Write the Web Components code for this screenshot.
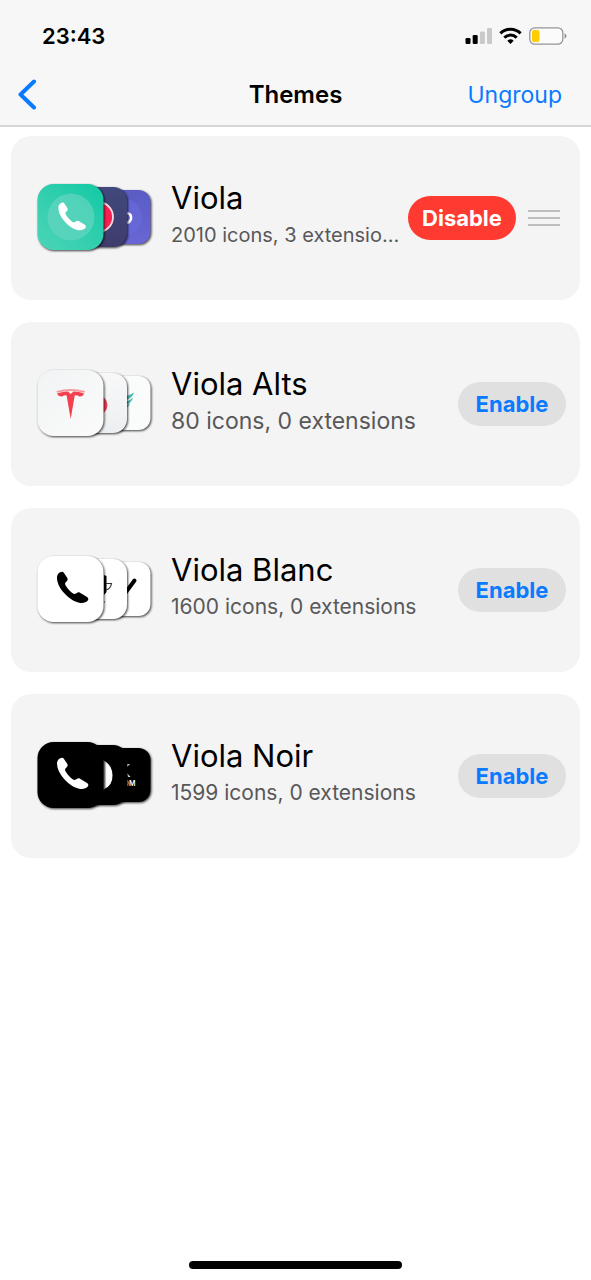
<!DOCTYPE html>
<html lang="en">
<head>
<meta charset="utf-8">
<meta name="viewport" content="width=device-width, initial-scale=1">
<title>Themes</title>
<style>
  html { font-family: Inter, "Liberation Sans", sans-serif; background: #fff; color: #000; }
  body { margin: 0; }
</style>
</head>
<body>
<themes-screen></themes-screen>

<script>
const define = (name, html, setup) => customElements.define(name, class extends HTMLElement {
  constructor() {
    super();
    this.attachShadow({ mode: "open" }).innerHTML = html;
  }
  connectedCallback() { if (setup) setup(this, this.shadowRoot); }
});

define("status-bar", `
  <style>
    :host { display: flex; align-items: center; justify-content: space-between; height: 56px; padding: 8px 24px 0 42px; }
    time { font-size: 22px; line-height: 28px; font-weight: 600; }
    .icons { display: flex; align-items: center; gap: 7px; }
    svg { display: block; }
  </style>
  <time>23:43</time>
  <div class="icons">
    <svg width="27" height="18" viewBox="0 0 27 18" aria-label="Signal">
      <rect x="0.500" y="11" width="5" height="6" rx="1.3"/><rect x="7.700" y="8" width="5" height="9" rx="1.3"/>
      <g fill="#c9c9c9"><rect x="14.900" y="4.500" width="5" height="12.500" rx="1.3"/><rect x="22" y="1" width="5" height="16" rx="1.3"/></g>
    </svg>
    <svg width="23" height="18" viewBox="0 0 23 18" fill="none" stroke="#000" stroke-width="3" aria-label="Wi-Fi">
      <path d="M1.400 6.400A14.500 14.500 0 0 1 21.600 6.400"/>
      <path d="M5.300 10.600A9 9 0 0 1 17.700 10.600"/>
      <path d="M11.500 17L8.300 13.700A4.700 4.700 0 0 1 14.700 13.700Z" fill="#000" stroke="none"/>
    </svg>
    <svg width="38" height="18" viewBox="0 0 38 18" aria-label="Battery">
      <rect x=".8" y=".8" width="33" height="16.400" rx="5" fill="#fbfbfb" stroke="#959595" stroke-width="1.300"/>
      <rect x="3" y="3" width="7.500" height="12" rx="2.200" fill="#fc0"/>
      <path d="M35.500 6.200Q37.600 7.200 37.600 9T35.500 11.800Z" fill="#959595"/>
    </svg>
  </div>`);

define("nav-bar", `
  <style>
    :host { display: grid; grid-template-columns: 1fr auto 1fr; align-items: center; height: 61px; padding: 0 29px 0 16px; border-bottom: 2px solid #d6d6d6; }
    h1 { margin: 0; font-size: 24px; line-height: 30px; font-weight: 600; padding-left: 13px; }
    button { border: 0; padding: 0; background: none; font: inherit; color: #0a7aff; cursor: pointer; }
    .back { justify-self: start; }
    .action { justify-self: end; font-size: 23px; line-height: 30px; }
    svg { display: block; }
  </style>
  <button class="back" aria-label="Back">
    <svg width="24" height="32" viewBox="0 0 24 32" fill="none" stroke="#0a7aff" stroke-width="4" stroke-linecap="round" stroke-linejoin="round"><path d="M18 2.500L4.500 15.500L18 28.500"/></svg>
  </button>
  <h1><slot></slot></h1>
  <button class="action"><slot name="action"></slot></button>`);

const phone = '<path d="M111 110C112 102 118 96 126 95C129 95 131 97 132 99L142 114C144 118 143 121 140 124L137 127C134 131 135 134 138 138C144 147 150 154 158 160C162 163 165 163 169 160C173 157 176 156 180 158L200 170C205 173 206 177 204 181C199 188 190 190 181 189C165 187 146 175 133 160C118 143 110 126 111 110Z" transform="translate(-11 -5) scale(.33333)"/>';
const art = {
  color: {
    fills: ["url(#violet)", "url(#navy)", "url(#green)"],
    back: '<circle cx="93" cy="44" r="18" fill="#6b6be0" opacity=".6"/><path d="M96 40Q101 41 100 46Q99 49 96 50" fill="none" stroke="#fff" stroke-width="2.600"/>',
    middle: '<circle cx="67" cy="44" r="15" fill="#f91f51" stroke="#fbdce4" stroke-width="1.800"/>',
    front: '<circle cx="40" cy="44" r="23.500" fill="#69d6c1" opacity=".65"/><g fill="#fff" transform="translate(41 43.500) scale(.88) translate(-41.500 -42.500)">' + phone + '</g>'
  },
  alts: {
    fills: ["#fafbfb", "url(#pale)", "url(#paper)"],
    back: '<g fill="#4bb9b2"><path d="M95 37Q99 36 103 33.500Q101.500 39 95 41Z"/><path d="M95 43Q99 41 102 38.500Q100.500 44 95 46Z"/><path d="M95 47Q97 46 99 44Q98 48 95 49Z"/></g>',
    middle: '<circle cx="67" cy="46" r="9.500" fill="#f33f51"/>',
    front: '<path d="M25.500 32Q39.500 28 54 32L53.500 33.800Q40 30 26 33.800Z" fill="#f59a9e"/><path d="M26 34.500Q32 32.600 37 32.600L39.700 35L42.500 32.600Q48 32.600 53 34.500Q52 37.800 48.500 37.500Q46 36 43.700 36.400L39.700 60L35.600 36.400Q33.500 36 31 37.500Q27.500 37.800 26 34.500Z" fill="#f33f4f"/>'
  },
  blanc: {
    fills: ["#fff", "#fff", "#fff"],
    back: '<path d="M95 47L103.500 35.500" stroke="#000" stroke-width="4" stroke-linecap="round"/>',
    middle: '<path d="M73 30L75.500 31V47L73 50Z"/><path d="M75 38.500H80.500Q79.500 44 75 45M73 57H74" fill="none" stroke="#333" stroke-width="1.200"/>',
    front: phone
  },
  noir: {
    fills: ["#000", "#000", "#000"],
    back: '<g fill="#fff"><path d="M96 33H99L96 36Z"/><path d="M96 42L99.500 46H97Z"/></g><text x="92.500" y="55" fill="#fff" font-size="7" font-weight="600">OM</text>',
    middle: '<path d="M73 30Q81.500 34 81.500 44.500T73 58Z" fill="#fff"/><path d="M72 29L74.500 31V57L72 59Z" fill="#aaa"/>',
    front: '<g fill="#fff">' + phone + '</g>'
  }
};

define("icon-stack", `
  <style>
    :host { display: block; flex: none; }
    svg { display: block; }
    .tile { filter: drop-shadow(1px 1px 1px #000b); }
  </style>
  <svg width="130" height="90" viewBox="0 0 130 90" aria-hidden="true"></svg>`,
  (host, root) => {
    const a = art[host.getAttribute("set")];
    root.querySelector("svg").innerHTML = `
      <defs>
        <linearGradient id="green" x1="0" y1="1" x2="1" y2="0"><stop stop-color="#4dd4b7"/><stop offset="1" stop-color="#13c9a5"/></linearGradient>
        <linearGradient id="navy" x2="0" y2="1"><stop stop-color="#41487b"/><stop offset="1" stop-color="#3f3c6d"/></linearGradient>
        <linearGradient id="violet" x2="0" y2="1"><stop stop-color="#5a5cc4"/><stop offset="1" stop-color="#6866d4"/></linearGradient>
        <linearGradient id="paper" x2="1" y2="1"><stop stop-color="#f1f3f4"/><stop offset="1" stop-color="#fbfbfb"/></linearGradient>
        <linearGradient id="pale" x2="0" y2="1"><stop stop-color="#f8f8f9"/><stop offset="1" stop-color="#eceff1"/></linearGradient>
      </defs>
      <rect class="tile" x="66" y="17" width="53.500" height="54" rx="12" fill="${a.fills[0]}"/>${a.back}
      <rect class="tile" x="36" y="14" width="60" height="60" rx="14" fill="${a.fills[1]}"/>${a.middle}
      <rect class="tile" x="6.500" y="11" width="66" height="66" rx="16" fill="${a.fills[2]}"/>${a.front}`;
  });

define("pill-button", `
  <style>
    :host { display: block; flex: none; }
    button { display: block; width: 108px; height: 44px; padding: 0; border: 0; border-radius: 22px; background: #e0e0e1; color: #0a7aff; font: inherit; font-size: 22px; line-height: 28px; font-weight: 700; cursor: pointer; }
    :host([danger]) button { background: #ff3a30; color: #fff; }
  </style>
  <button><slot></slot></button>`);

define("drag-handle", `
  <style>
    :host { display: block; flex: none; margin: 0 6px 0 12px; }
    button { display: grid; gap: 5px; width: 32px; padding: 0; border: 0; background: none; cursor: grab; }
    i { display: block; height: 2px; background: #bebebf; }
  </style>
  <button aria-label="Reorder"><i></i><i></i><i></i></button>`);

define("theme-card", `
  <style>
    :host { display: flex; align-items: center; min-height: 164px; padding: 0 14px 0 20px; border-radius: 20px; background: #f4f4f4; box-sizing: border-box; }
    .text { flex: 1; min-width: 0; padding: 0 6px 6px 10px; }
    h2, p { margin: 0; font-weight: 400; white-space: nowrap; overflow: hidden; text-overflow: ellipsis; }
    h2 { font-size: 31px; line-height: 40px; }
    p { font-size: 21px; line-height: 34px; color: #58585a; }
    :host([detail="small"]) p { font-size: 20px; }
    :host([detail="large"]) p { font-size: 23px; }
  </style>
  <slot name="icon"></slot>
  <div class="text"><h2><slot></slot></h2><p><slot name="detail"></slot></p></div>
  <slot name="controls"></slot>`);

define("themes-screen", `
  <style>
    :host { display: flex; flex-direction: column; min-height: 100vh; }
    header { background: #f7f7f7; }
    main { flex: 1; display: flex; flex-direction: column; gap: 22px; padding: 9px 11px; }
    .controls { display: flex; align-items: center; flex: none; }
    footer { display: flex; justify-content: center; padding-bottom: 11px; }
    footer div { width: 36%; height: 8px; border-radius: 4px; background: #000; }
  </style>
  <header>
    <status-bar></status-bar>
    <nav-bar>Themes<span slot="action">Ungroup</span></nav-bar>
  </header>
  <main>
    <theme-card detail="small"><icon-stack slot="icon" set="color"></icon-stack>Viola<span slot="detail">2010 icons, 3 extensions</span>
      <div class="controls" slot="controls"><pill-button danger>Disable</pill-button><drag-handle></drag-handle></div></theme-card>
    <theme-card detail="large"><icon-stack slot="icon" set="alts"></icon-stack>Viola Alts<span slot="detail">80 icons, 0 extensions</span>
      <pill-button slot="controls">Enable</pill-button></theme-card>
    <theme-card><icon-stack slot="icon" set="blanc"></icon-stack>Viola Blanc<span slot="detail">1600 icons, 0 extensions</span>
      <pill-button slot="controls">Enable</pill-button></theme-card>
    <theme-card><icon-stack slot="icon" set="noir"></icon-stack>Viola Noir<span slot="detail">1599 icons, 0 extensions</span>
      <pill-button slot="controls">Enable</pill-button></theme-card>
  </main>
  <footer><div></div></footer>`);
</script>
</body>
</html>
